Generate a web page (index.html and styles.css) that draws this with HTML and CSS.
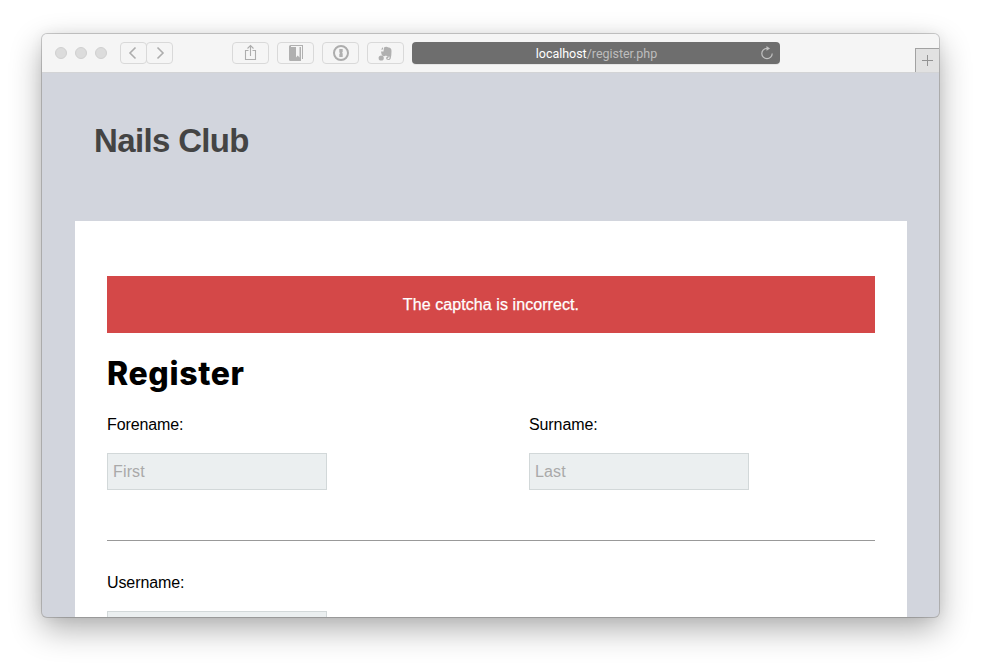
FILE: index.html
```html
<!DOCTYPE html>
<html lang="en">
<head>
<meta charset="utf-8">
<title>Nails Club</title>
<link rel="stylesheet" href="styles.css">
</head>
<body>
<div class="window">
  <header class="toolbar">
    <div class="lights"><i></i><i></i><i></i></div>
    <div class="nav">
      <span class="btn"><svg width="25" height="20" viewBox="0 0 25 20"><path d="M14.500 4.500 9 10l5.500 5.500"/></svg></span>
      <span class="btn"><svg width="25" height="20" viewBox="0 0 25 20"><path d="M10.500 4.500 16 10l-5.500 5.500"/></svg></span>
    </div>
    <div class="tools">
      <span class="btn"><svg class="thin" width="35" height="20" viewBox="0 0 35 20"><path d="M15.500 7.500h-3v9h10v-9h-3M17.500 13V2.500M14.500 5.500l3-3 3 3"/></svg></span>
      <span class="btn"><svg class="solid" width="35" height="20" viewBox="0 0 35 20"><path fill-rule="evenodd" d="M11 3.500Q11 2 12.500 2H25v14h-1V3H13v1h10v14H12.500Q11 18 11 16.500zM18 4v10.500l1.700-2 1.800 2V4z"/></svg></span>
      <span class="btn"><svg width="35" height="20" viewBox="0 0 35 20"><circle class="ring" cx="18" cy="10" r="7"/><path class="fill" d="M16.300 6h3.400v3l-.700.700.700.900V14h-3.400v-3l.700-.800-.700-.900z"/></svg></span>
      <span class="btn"><svg class="solid" width="35" height="20" viewBox="0 0 35 20"><path d="M16 4.500q2-1.500 4.500 0 3 0 3 3.500 0 5-.800 7.500-.500 1.500-2.200 1.500-2.500 0-2.500-2 0-1.500 2.500-1.500v1.200q-1.200 0-1 .800.300.800 1.500.5.700-.500.500-2.500-2.500.5-3.500-1-1.500 1-3 .5-1.500-.5-2-4.500h2.500zM15 4v2.500h-2z"/><circle cx="13.200" cy="15" r="2.600"/></svg></span>
    </div>
    <div class="address"><span><b>localhost</b>/register.php</span>
      <svg class="reload" width="14" height="14" viewBox="0 0 14 14"><path d="M7 2.300a5.200 5.200 0 1 0 5.200 5.200"/><path class="fill" d="M6.500 0v4.800L10 2.500z"/></svg>
    </div>
    <div class="newtab"><svg width="11" height="11" viewBox="0 0 11 11"><path d="M5.500 0v11M0 5.500h11"/></svg></div>
  </header>
  <main class="page">
    <h1>Nails Club</h1>
    <section class="card">
      <div class="alert">The captcha is incorrect.</div>
      <h2>Register</h2>
      <div class="row">
        <label>Forename:<input type="text" placeholder="First"></label>
        <label>Surname:<input type="text" placeholder="Last"></label>
      </div>
      <hr>
      <div class="row">
        <label>Username:<input type="text"></label>
      </div>
    </section>
  </main>
</div>
</body>
</html>
```
FILE: styles.css
```css
* { box-sizing: border-box; }
body {
  margin: 0;
  height: 667px;
  padding: 34px 42px 0;
  overflow: hidden;
  background: #fff;
  font: 16px/20px "Liberation Sans", Arial, sans-serif;
  color: #000;
}
.window {
  width: 897px;
  height: 583px;
  overflow: hidden;
  border-radius: 5px;
  background: #d2d5dd;
  box-shadow: 0 0 0 1px rgba(0, 0, 0, .18), 0 12px 32px rgba(0, 0, 0, .32), 0 0 14px rgba(0, 0, 0, .06);
}
.toolbar {
  display: flex;
  height: 39px;
  padding: 8px 0 0 13px;
  background: #f5f5f5;
  border-bottom: 1px solid #d3d4d6;
}
.lights { display: flex; gap: 8px; padding-top: 5px; margin-right: 13px; }
.lights i { width: 12px; height: 12px; border-radius: 50%; background: #dcdcdc; border: 1px solid #d0d0d0; }
.btn { display: block; height: 22px; border: 1px solid #d9d9d9; border-radius: 4px; }
.nav { display: flex; margin-right: 59px; }
.nav .btn + .btn { margin-left: -1px; }
.tools { display: flex; gap: 8px; margin-right: 8px; }
svg { display: block; fill: none; stroke: #adadad; stroke-width: 1.6; }
.thin { stroke-width: 1.1; }
.ring { stroke-width: 2; }
.solid, svg .fill { fill: #b0b0b0; stroke: none; }
.address {
  display: flex;
  align-items: center;
  justify-content: center;
  position: relative;
  width: 368px;
  height: 22px;
  border-radius: 4px;
  background: #6e6e6e;
  box-shadow: 0 1px 0 #e5e5e5;
  color: #bdbdbd;
  font: 12.5px/22px Roboto, sans-serif;
  letter-spacing: -.03px;
}
.address span { padding: 2px 0 0 1px; }
.address b { font-weight: 400; color: #fff; }
.reload { position: absolute; right: 6px; top: 4px; stroke: #c2c2c2; stroke-width: 1.2; }
.reload .fill { fill: #c2c2c2; }
.newtab {
  width: 24px;
  height: 24px;
  margin: 6px 0 0 auto;
  padding: 6px 0 0 6px;
  background: #e1e1e1;
  border: solid #a2a2a2;
  border-width: 1px 0 0 1px;
}
.newtab svg { stroke: #929292; stroke-width: 1; }
.page { padding: 48px 32px 0 33px; }
h1 { margin: 0 0 60px 19px; font-size: 33px; line-height: 40px; letter-spacing: -.65px; color: #444; }
.card { height: 500px; padding: 55px 32px 0; background: #fff; }
.alert { height: 57px; line-height: 57px; text-align: center; color: #fff; background: #d44848; letter-spacing: .08px; -webkit-text-stroke: .25px #fff; }
h2 { margin: 21px 0 21px; font: 800 32px/40px Inter, sans-serif; letter-spacing: .65px; }
.row { display: grid; grid-template-columns: 422px 1fr; }
label { display: block; letter-spacing: -.1px; }
input {
  display: block;
  width: 220px;
  height: 37px;
  margin-top: 18px;
  padding: 0 5px;
  border: 1px solid #d2d8d9;
  border-radius: 0;
  background: #ebeff0;
  font: inherit;
  letter-spacing: .15px;
}
input::placeholder { color: #a9a9a9; opacity: 1; }
hr { height: 1px; margin: 50px 0 32px; border: 0; background: #999; }
```
